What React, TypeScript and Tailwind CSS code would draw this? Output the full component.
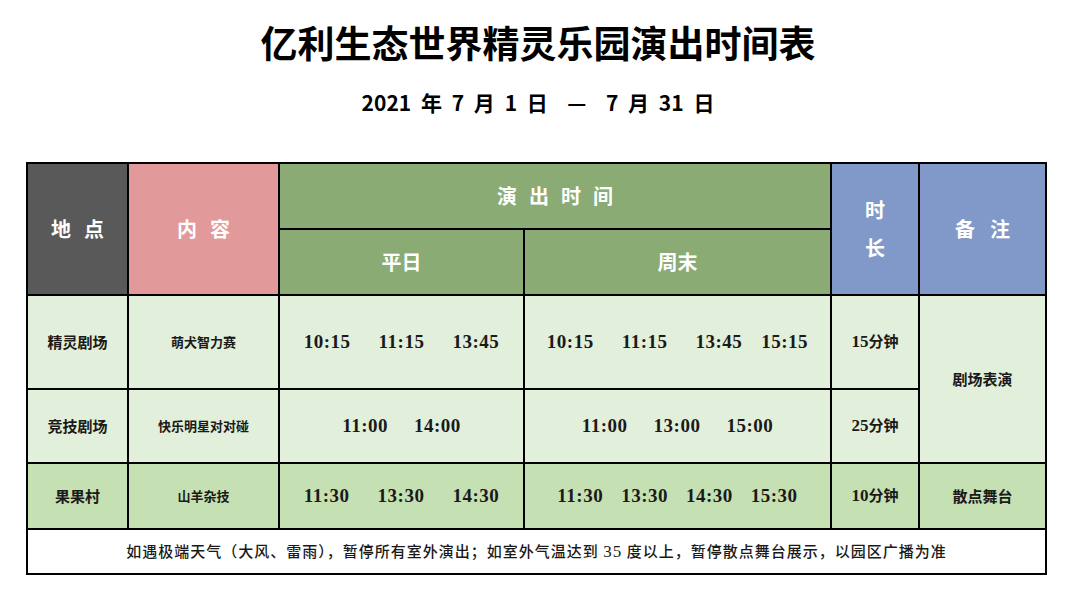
import React from "react";

const CJK = "font-['Noto_Sans_CJK_SC',sans-serif]";
const SERIF = "font-['Liberation_Serif','Noto_Sans_CJK_SC',serif]";

const cell = "border-2 border-black text-center align-middle p-0";

function Spaced({ text, gap }: { text: string; gap: string }) {
  return (
    <span className={`inline-flex justify-center ${gap}`}>
      {text.split("").map((ch, i) => (
        <span key={i}>{ch}</span>
      ))}
    </span>
  );
}

function Times({ items, gaps }: { items: string[]; gaps: number[] }) {
  return (
    <div className={`flex items-center justify-center ${SERIF} text-[19px] font-bold tracking-[0.5px] text-[#1a1a1a]`}>
      {items.map((t, i) => (
        <span key={t} style={{ marginLeft: i === 0 ? 0 : gaps[i - 1] }}>
          {t}
        </span>
      ))}
    </div>
  );
}

export default function App() {
  const label = `${CJK} font-bold text-[#1a1a1a]`;
  return (
    <div className="w-[1076px] h-[598px] bg-white">
      <h1 className={`${CJK} pt-[19px] text-center text-[37px] font-bold leading-[46px] text-black`}>
        亿利生态世界精灵乐园演出时间表
      </h1>
      <p className={`${CJK} mt-[22px] text-center text-[21px] font-bold leading-[30px] text-black [word-spacing:5px]`}>
        2021 年 7 月 1 日 &nbsp;— &nbsp;7 月 31 日
      </p>

      <table className="ml-[26px] mt-[45px] w-[1019px] table-fixed border-collapse border-2 border-black">
        <colgroup>
          <col className="w-[101px]" />
          <col className="w-[151px]" />
          <col className="w-[245px]" />
          <col className="w-[307px]" />
          <col className="w-[88px]" />
          <col className="w-[127px]" />
        </colgroup>
        <thead>
          <tr className="h-[66px]">
            <th rowSpan={2} className={`${cell} bg-[#595959] ${CJK} text-[20px] font-bold text-white`}>
              <Spaced text="地点" gap="gap-[13px]" />
            </th>
            <th rowSpan={2} className={`${cell} bg-[#e29999] ${CJK} text-[20px] font-bold text-white`}>
              <Spaced text="内容" gap="gap-[13px]" />
            </th>
            <th colSpan={2} className={`${cell} bg-[#8aab74] ${CJK} text-[20px] font-bold text-white`}>
              <Spaced text="演出时间" gap="gap-[12px]" />
            </th>
            <th rowSpan={2} className={`${cell} bg-[#8099c9] ${CJK} text-[20px] font-bold text-white`}>
              <div className="flex flex-col items-center gap-[18px] leading-[20px]">
                <span>时</span>
                <span>长</span>
              </div>
            </th>
            <th rowSpan={2} className={`${cell} bg-[#8099c9] ${CJK} text-[20px] font-bold text-white`}>
              <Spaced text="备注" gap="gap-[15px]" />
            </th>
          </tr>
          <tr className="h-[66px]">
            <th className={`${cell} bg-[#8aab74] ${CJK} text-[20px] font-bold text-white`}>平日</th>
            <th className={`${cell} bg-[#8aab74] ${CJK} text-[20px] font-bold text-white`}>周末</th>
          </tr>
        </thead>
        <tbody>
          <tr className="h-[94px] bg-[#e2efda]">
            <td className={`${cell} ${label} text-[15px]`}>精灵剧场</td>
            <td className={`${cell} ${label} text-[13px]`}>萌犬智力赛</td>
            <td className={cell}>
              <Times items={["10:15", "11:15", "13:45"]} gaps={[28, 28]} />
            </td>
            <td className={cell}>
              <Times items={["10:15", "11:15", "13:45", "15:15"]} gaps={[28, 28, 19]} />
            </td>
            <td className={`${cell} ${label} text-[15px]`}>
              <span className={`${SERIF} text-[17px]`}>15</span>分钟
            </td>
            <td rowSpan={2} className={`${cell} ${label} text-[15px]`}>剧场表演</td>
          </tr>
          <tr className="h-[74px] bg-[#e2efda]">
            <td className={`${cell} ${label} text-[15px]`}>竞技剧场</td>
            <td className={`${cell} ${label} text-[13px]`}>快乐明星对对碰</td>
            <td className={cell}>
              <Times items={["11:00", "14:00"]} gaps={[26]} />
            </td>
            <td className={cell}>
              <Times items={["11:00", "13:00", "15:00"]} gaps={[26, 26]} />
            </td>
            <td className={`${cell} ${label} text-[15px]`}>
              <span className={`${SERIF} text-[17px]`}>25</span>分钟
            </td>
          </tr>
          <tr className="h-[66px] bg-[#c5e0b3]">
            <td className={`${cell} ${label} text-[15px]`}>果果村</td>
            <td className={`${cell} ${label} text-[13px]`}>山羊杂技</td>
            <td className={cell}>
              <Times items={["11:30", "13:30", "14:30"]} gaps={[28, 28]} />
            </td>
            <td className={cell}>
              <Times items={["11:30", "13:30", "14:30", "15:30"]} gaps={[18, 18, 18]} />
            </td>
            <td className={`${cell} ${label} text-[15px]`}>
              <span className={`${SERIF} text-[17px]`}>10</span>分钟
            </td>
            <td className={`${cell} ${label} text-[15px]`}>散点舞台</td>
          </tr>
          <tr className="h-[45px] bg-white">
            <td colSpan={6} className={`${cell} ${CJK} text-[15px] font-medium tracking-[1px] text-[#1a1a1a]`}>
              如遇极端天气（大风、雷雨），暂停所有室外演出；如室外气温达到 <span className={`${SERIF} text-[17px]`}>35</span> 度以上，暂停散点舞台展示，以园区广播为准
            </td>
          </tr>
        </tbody>
      </table>
    </div>
  );
}
